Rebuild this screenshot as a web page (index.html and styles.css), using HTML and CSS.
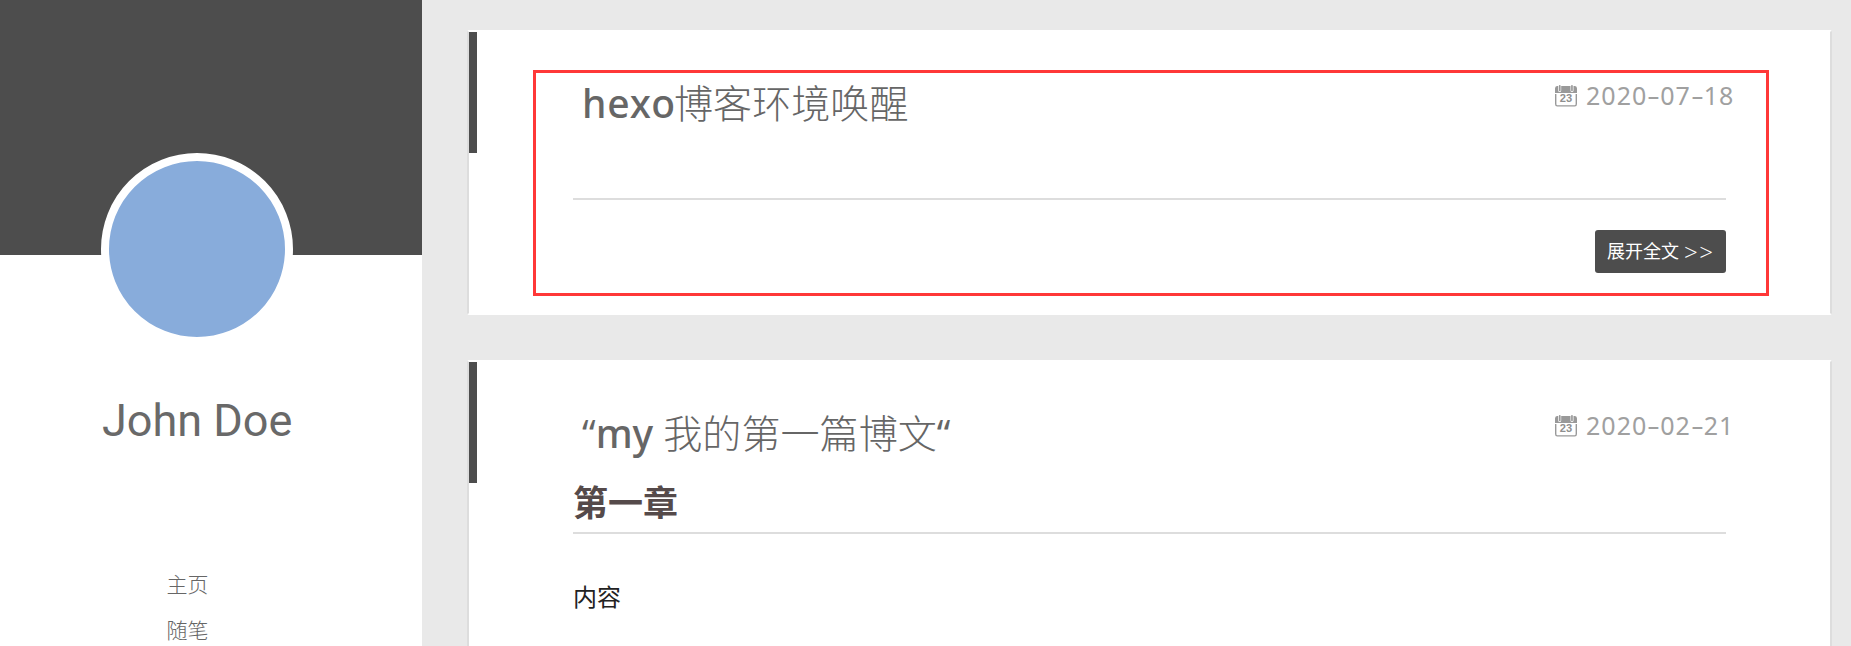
FILE: index.html
```html
<!DOCTYPE html>
<html lang="zh-CN">
<head>
<meta charset="utf-8">
<title>Hexo</title>
<link rel="stylesheet" href="styles.css">
</head>
<body>
<div class="page">
  <aside class="sidebar">
    <div class="overlay"></div>
    <div class="avatar"></div>
    <h1 class="author">John Doe</h1>
    <nav class="menu"><a>主页</a><a>随笔</a></nav>
  </aside>
  <main class="posts">
    <article class="post post-short">
      <div class="accent"></div>
      <div class="post-body">
        <header class="post-header">
          <h2 class="title"><span class="latin">hexo</span>博客环境唤醒</h2>
          <div class="date">
            <svg class="icon" viewBox="0 0 22 22">
              <path fill="#999" d="M0 8V3.5Q0 1 2 1H3.2V5.4Q3.2 6.9 4.7 6.9T6.2 5.4V1H15.5V5.4Q15.5 6.9 17 6.9T18.5 5.4V1H20Q22 1 22 3.5V8Z"/>
              <rect x="3.9" y="0" width="1.7" height="6.2" rx=".8" fill="#999"/>
              <rect x="16.1" y="0" width="1.7" height="6.2" rx=".8" fill="#999"/>
              <path fill="none" stroke="#999" stroke-width="1.4" d="M.7 9V19Q.7 20.9 2.3 20.9H19.7Q21.3 20.9 21.3 19V9"/>
              <text class="calendar-day" x="11" y="17.3" textLength="12.4" lengthAdjust="spacingAndGlyphs">23</text>
            </svg>
            <time>2020<i>-</i>07<i>-</i>18</time>
          </div>
        </header>
        <footer class="post-footer"><a class="more">展开全文<span class="arrows">&gt;&gt;</span></a></footer>
      </div>
      <div class="marker"></div>
    </article>
    <article class="post post-long">
      <div class="accent"></div>
      <div class="post-body">
        <header class="post-header">
          <h2 class="title"><span class="quote">“</span><span class="latin my">my</span> 我的第一篇博文<span class="quote">“</span></h2>
          <div class="date">
            <svg class="icon" viewBox="0 0 22 22">
              <path fill="#999" d="M0 8V3.5Q0 1 2 1H3.2V5.4Q3.2 6.9 4.7 6.9T6.2 5.4V1H15.5V5.4Q15.5 6.9 17 6.9T18.5 5.4V1H20Q22 1 22 3.5V8Z"/>
              <rect x="3.9" y="0" width="1.7" height="6.2" rx=".8" fill="#999"/>
              <rect x="16.1" y="0" width="1.7" height="6.2" rx=".8" fill="#999"/>
              <path fill="none" stroke="#999" stroke-width="1.4" d="M.7 9V19Q.7 20.9 2.3 20.9H19.7Q21.3 20.9 21.3 19V9"/>
              <text class="calendar-day" x="11" y="17.3" textLength="12.4" lengthAdjust="spacingAndGlyphs">23</text>
            </svg>
            <time>2020<i>-</i>02<i>-</i>21</time>
          </div>
        </header>
        <h3 class="chapter">第一章</h3>
        <p class="content">内容</p>
      </div>
    </article>
  </main>
</div>
</body>
</html>
```
FILE: styles.css
```css
* { box-sizing: border-box; }
body {
  margin: 0;
  background: #e9e9e9;
  font-family: "Noto Sans", "Noto Sans CJK SC", sans-serif;
  overflow: hidden;
}
.page { display: flex; height: 646px; overflow: hidden; }

.sidebar {
  width: 422px;
  flex: none;
  background: #fff;
  display: flex;
  flex-direction: column;
}
.overlay { height: 255px; background: #4d4d4d; flex: none; }
.avatar {
  width: 192px;
  height: 192px;
  flex: none;
  margin: -102px 0 0 101px;
  border: 8px solid #fff;
  border-radius: 50%;
  background: #88acdb;
}
.author {
  margin: 48px 0 0 102px;
  font: 400 45px/56px Roboto, sans-serif;
  color: #696969;
  white-space: nowrap;
}
.menu { display: flex; flex-direction: column; margin: 111px 0 0 166.5px; }
.menu a {
  height: 46px;
  font: 300 21px/46px "Noto Sans CJK SC", sans-serif;
  color: #666;
}

.posts {
  flex: none;
  width: 1365px;
  margin: 30px 0 0 45px;
  display: flex;
  flex-direction: column;
  gap: 45px;
}
.post {
  position: relative;
  flex: none;
  display: flex;
  background: #fff;
  border: 2px solid #ddd;
  border-top-color: #fff;
  border-bottom-color: #fff;
  border-radius: 2px;
}
.post-short { height: 285px; }
.post-long { height: 400px; }
.accent { width: 8px; height: 121px; background: #4d4d4d; flex: none; }
.post-body { width: 1153px; margin-left: 96px; }
.post-header {
  display: flex;
  justify-content: space-between;
  height: 84px;
  padding: 39px 0 0 9px;
}
.title {
  margin: 0;
  font: 300 39.1px/60px "Noto Sans CJK SC", sans-serif;
  color: #666;
  white-space: nowrap;
}
.latin {
  display: inline-block;
  width: 92px;
  font: 500 39px/60px "Noto Sans", sans-serif;
  letter-spacing: .9px;
}
.my { width: 59px; letter-spacing: 0; }
.quote { font-family: "Open Sans", sans-serif; font-weight: 400; }
.date {
  flex: none;
  display: flex;
  align-items: flex-start;
  width: 172px;
  margin: 11px -1px 0 0;
}
.icon { width: 22px; height: 22px; margin-top: 3px; flex: none; }
.calendar-day {
  font: 700 10px "Liberation Sans", sans-serif;
  text-anchor: middle;
  fill: #8f8f8f;
}
.date time {
  margin-left: 9px;
  font: 400 25px/26px "Noto Sans", sans-serif;
  letter-spacing: 1.05px;
  color: #a0a0a0;
  white-space: nowrap;
}
.date i {
  display: inline-block;
  width: 12.8px;
  font-style: normal;
  letter-spacing: 0;
  text-align: center;
  transform: scaleX(1.6);
}
.post-footer {
  display: flex;
  justify-content: flex-end;
  margin-top: 82px;
  padding-top: 30px;
  border-top: 2px solid #ddd;
}
.more {
  display: flex;
  gap: 5px;
  width: 131px;
  height: 43px;
  padding-left: 12px;
  border-radius: 3px;
  background: #4d4d4d;
  color: #fff;
  font: 400 18px/41px "Noto Sans CJK SC", sans-serif;
  white-space: nowrap;
}
.arrows { font: 300 24px/44px "Open Sans", sans-serif; letter-spacing: 1.5px; }
.chapter {
  margin: 25px 0 0;
  height: 63px;
  border-bottom: 2px solid #ddd;
  font: 700 35px/60px "Noto Sans CJK SC", sans-serif;
  color: #554a4a;
}
.content {
  margin: 44px 0 0;
  font: 400 24px/36px "Noto Sans CJK SC", sans-serif;
  color: #222;
}
.marker {
  position: absolute;
  left: 64px;
  top: 38px;
  width: 1236px;
  height: 226px;
  border: 3px solid #ff3838;
}
```
